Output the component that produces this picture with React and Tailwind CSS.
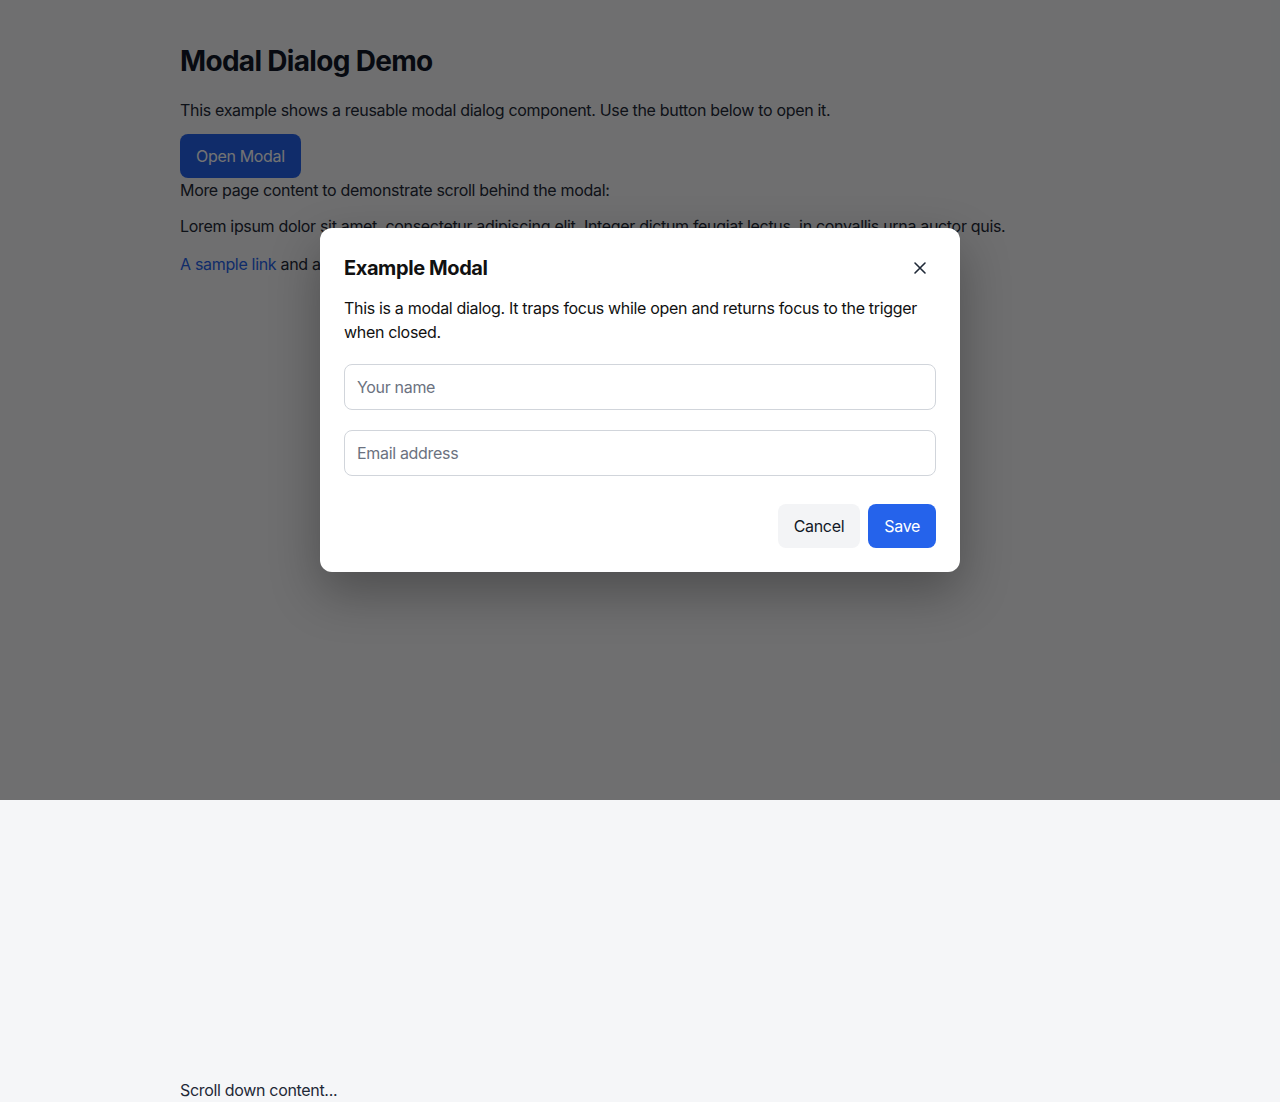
import React from "react";

function CloseIcon() {
  return (
    <svg width="14" height="14" viewBox="0 0 14 14" fill="none" stroke="currentColor" strokeWidth="1.6" strokeLinecap="round">
      <path d="M2 2L12 12M12 2L2 12" />
    </svg>
  );
}

export default function App() {
  return (
    <div className="relative min-h-[1102px] bg-[#f5f6f8] text-[#1f2937] font-['Inter','Noto_Sans',sans-serif] text-[16px] tracking-[-0.32px]">
      <main className="mx-auto w-[920px] pt-[44px]">
        <h1 className="text-[28px] leading-[34px] font-bold tracking-[-0.68px] text-[#111827]">Modal Dialog Demo</h1>
        <p className="mt-[20px] leading-[24px]">
          This example shows a reusable modal dialog component. Use the button below to open it.
        </p>
        <button className="mt-[12px] h-[44px] px-[16px] rounded-lg bg-[#2563eb] text-white leading-[24px]">
          Open Modal
        </button>
        <p className="leading-[24px]">More page content to demonstrate scroll behind the modal:</p>
        <p className="mt-[12px] leading-[24px]">
          Lorem ipsum dolor sit amet, consectetur adipiscing elit. Integer dictum feugiat lectus, in convallis urna auctor quis.
        </p>
        <p className="mt-[14px] leading-[24px]">
          <a href="#" className="text-[#2563eb]">A sample link</a> and a focusable button to test tab order.
        </p>
        <div className="h-[802px]" />
        <p className="leading-[24px]">Scroll down content...</p>
      </main>

      <div className="absolute left-0 top-0 w-full h-[800px] bg-black/[0.55] flex items-center justify-center">
        <div
          role="dialog"
          aria-modal="true"
          className="w-[640px] bg-white rounded-xl p-[24px] shadow-[0_20px_50px_rgba(0,0,0,0.3)] text-[#111]"
        >
          <div className="flex items-center justify-between h-[32px]">
            <h2 className="text-[20px] leading-[28px] font-bold tracking-[-0.4px] text-[#111]">Example Modal</h2>
            <button className="w-[32px] h-[32px] flex items-center justify-center text-[#1f2937] rounded-md" aria-label="Close">
              <CloseIcon />
            </button>
          </div>
          <p className="mt-[12px] leading-[24px] text-[#111]">
            This is a modal dialog. It traps focus while open and returns focus to the trigger when closed.
          </p>
          <input
            className="mt-[20px] block w-full h-[46px] px-[12px] rounded-lg border border-[#d1d5db] text-[16px] tracking-[-0.32px] placeholder:text-[#6b7280] outline-none"
            placeholder="Your name"
          />
          <input
            className="mt-[20px] block w-full h-[46px] px-[12px] rounded-lg border border-[#d1d5db] text-[16px] tracking-[-0.32px] placeholder:text-[#6b7280] outline-none"
            placeholder="Email address"
          />
          <div className="mt-[28px] flex justify-end gap-[8px]">
            <button className="h-[44px] px-[16px] rounded-lg bg-[#f3f4f6] text-[#111827] leading-[24px]">Cancel</button>
            <button className="h-[44px] px-[16px] rounded-lg bg-[#2563eb] text-white leading-[24px]">Save</button>
          </div>
        </div>
      </div>
    </div>
  );
}
